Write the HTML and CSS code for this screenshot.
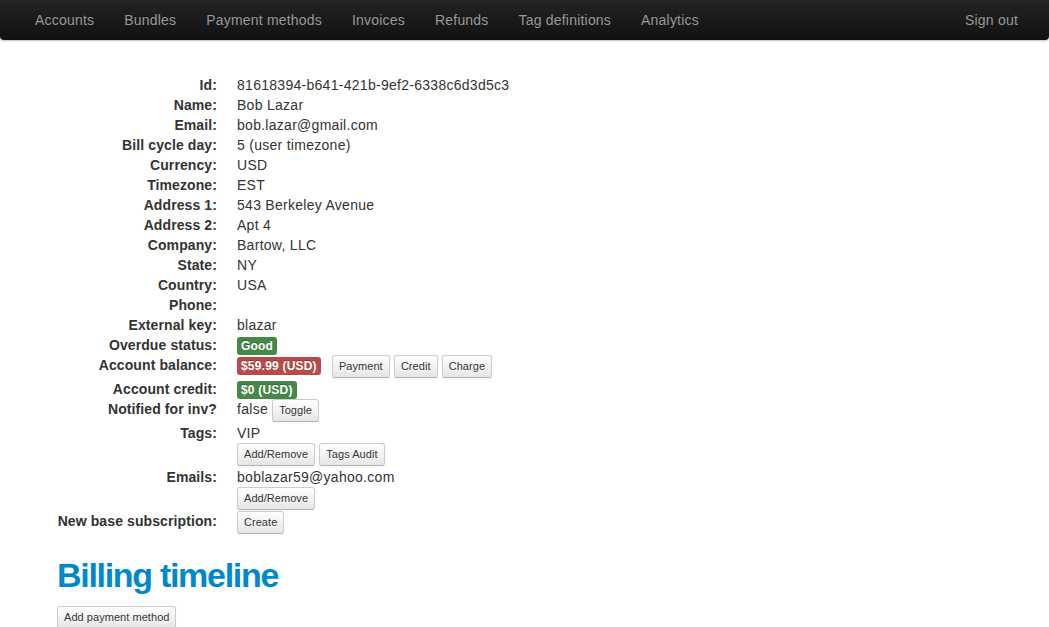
FILE: index.html
```html
<!DOCTYPE html>
<html>
<head>
<meta charset="utf-8">
<link rel="stylesheet" href="styles.css">
</head>
<body>
<div class="navbar">
  <ul class="nav">
    <li><a href="#">Accounts</a></li>
    <li><a href="#">Bundles</a></li>
    <li><a href="#">Payment methods</a></li>
    <li><a href="#">Invoices</a></li>
    <li><a href="#">Refunds</a></li>
    <li><a href="#">Tag definitions</a></li>
    <li><a href="#">Analytics</a></li>
  </ul>
  <ul class="nav">
    <li><a href="#">Sign out</a></li>
  </ul>
</div>
<div class="container">
  <dl class="info">
    <dt>Id:</dt><dd>81618394-b641-421b-9ef2-6338c6d3d5c3</dd>
    <dt>Name:</dt><dd>Bob Lazar</dd>
    <dt>Email:</dt><dd>bob.lazar@gmail.com</dd>
    <dt>Bill cycle day:</dt><dd>5 (user timezone)</dd>
    <dt>Currency:</dt><dd>USD</dd>
    <dt>Timezone:</dt><dd>EST</dd>
    <dt>Address 1:</dt><dd>543 Berkeley Avenue</dd>
    <dt>Address 2:</dt><dd>Apt 4</dd>
    <dt>Company:</dt><dd>Bartow, LLC</dd>
    <dt>State:</dt><dd>NY</dd>
    <dt>Country:</dt><dd>USA</dd>
    <dt>Phone:</dt><dd>&nbsp;</dd>
    <dt>External key:</dt><dd>blazar</dd>
    <dt>Overdue status:</dt><dd><span class="label label-success">Good</span></dd>
    <dt>Account balance:</dt><dd><span class="label label-important">$59.99 (USD)</span> <span class="actions"><a class="btn" href="#">Payment</a> <a class="btn" href="#">Credit</a> <a class="btn" href="#">Charge</a></span></dd>
    <dt>Account credit:</dt><dd><span class="label label-success">$0 (USD)</span></dd>
    <dt>Notified for inv?</dt><dd>false <a class="btn" href="#">Toggle</a></dd>
    <dt>Tags:</dt><dd>VIP<div><a class="btn" href="#">Add/Remove</a> <a class="btn" href="#">Tags Audit</a></div></dd>
    <dt>Emails:</dt><dd>boblazar59@yahoo.com<div><a class="btn" href="#">Add/Remove</a></div></dd>
    <dt>New base subscription:</dt><dd><a class="btn" href="#">Create</a></dd>
  </dl>
  <h1 class="title">Billing timeline</h1>
  <div><a class="btn" href="#">Add payment method</a></div>
</div>
</body>
</html>
```

FILE: styles.css
```css
html, body {
  margin: 0;
  padding: 0;
  background: #fff;
}
body {
  font-family: "Liberation Sans", Arial, sans-serif;
  font-size: 14px;
  line-height: 20px;
  color: #333;
}
.navbar {
  height: 40px;
  display: flex;
  justify-content: space-between;
  align-items: stretch;
  padding: 0 16px 0 20px;
  background: linear-gradient(to bottom, #232323, #111111);
  border-radius: 0 0 4px 4px;
  box-shadow: 0 1px 2px rgba(0, 0, 0, 0.25);
}
.nav {
  list-style: none;
  margin: 0;
  padding: 0;
  display: flex;
}
.nav a {
  display: block;
  padding: 10px 15px;
  color: #9a9a9a;
  text-decoration: none;
  font-size: 14px;
  line-height: 20px;
  letter-spacing: 0.2px;
  text-shadow: 0 -1px 0 rgba(0, 0, 0, 0.25);
}
.container {
  padding: 35px 0 0 57px;
}
.info {
  margin: 0;
  display: grid;
  grid-template-columns: 160px 1fr;
  column-gap: 20px;
  align-items: baseline;
}
.info dt {
  font-weight: bold;
  text-align: right;
  white-space: nowrap;
  letter-spacing: 0.1px;
}
.info dd {
  margin: 0;
  letter-spacing: 0.28px;
}
.label {
  display: inline-block;
  padding: 2px 4px;
  font-size: 12px;
  font-weight: bold;
  line-height: 14px;
  color: #fff;
  border-radius: 3px;
  letter-spacing: 0.2px;
  text-shadow: 0 -1px 0 rgba(0, 0, 0, 0.25);
  vertical-align: baseline;
}
.label-success {
  background: #468847;
}
.label-important {
  background: #b94a48;
}
.actions {
  margin-left: 7px;
}
.btn {
  display: inline-block;
  padding: 3px 6px;
  margin-bottom: 1px;
  font-size: 11px;
  line-height: 15px;
  letter-spacing: 0.05px;
  color: #333;
  text-decoration: none;
  text-shadow: 0 1px 1px rgba(255, 255, 255, 0.75);
  background: linear-gradient(to bottom, #ffffff, #e6e6e6);
  border: 1px solid #cccccc;
  border-bottom-color: #b3b3b3;
  border-radius: 3px;
  box-shadow: inset 0 1px 0 rgba(255, 255, 255, 0.2), 0 1px 2px rgba(0, 0, 0, 0.05);
}
.title {
  margin: 20px 0 11px;
  font-size: 34px;
  line-height: 40px;
  letter-spacing: -1.3px;
  font-weight: bold;
  color: #0088cc;
}
```
